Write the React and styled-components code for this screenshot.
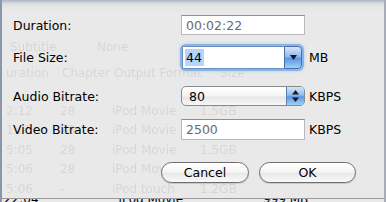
import styled, { createGlobalStyle } from "styled-components";

const GlobalStyle = createGlobalStyle`
  html, body {
    margin: 0;
    padding: 0;
    background: #e8e8e8;
  }
`;

const FONT = `"DejaVu Sans", "Liberation Sans", sans-serif`;

const ghostRows = [
  { y: 40, cells: [["Subtitle", 8], ["None", 95]] },
  { y: 66, cells: [["uration", 4], ["Chapter", 60], ["Output Format", 112], ["Size", 218]] },
  { y: 104, cells: [["2:12", 4], ["28", 58], ["iPod Movie", 110], ["1.5GB", 198]] },
  { y: 123, cells: [["1:05", 4], ["28", 58], ["iPod Movie", 110], ["1.5GB", 198]] },
  { y: 143, cells: [["5:05", 4], ["28", 58], ["iPod Movie", 110], ["1.5GB", 198]] },
  { y: 162, cells: [["5:06", 4], ["28", 58], ["iPod Movie", 110], ["1.2GB", 198]] },
  { y: 182, cells: [["5:06", 4], ["-", 58], ["iPod touch", 110], ["1.2GB", 198]] },
];

const SheetDialog = () => {
  return (
    <Sheet>
      <Backdrop>
        {ghostRows.map((row, i) => (
          <GhostRow key={i} style={{ top: row.y }}>
            {row.cells.map(([t, x], j) => (
              <GhostCell key={j} style={{ left: x }}>
                {t}
              </GhostCell>
            ))}
          </GhostRow>
        ))}
      </Backdrop>

      <Form>
        <Row $top={15} $height={20}>
          <Label>Duration:</Label>
          <TextField $muted>00:02:22</TextField>
        </Row>

        <Row $top={11} $height={23}>
          <Label>File Size:</Label>
          <Combo>
            <ComboText>
              <Selected>44</Selected>
            </ComboText>
            <ComboButton>
              <svg width="7" height="5" viewBox="0 0 7 5">
                <path d="M0 0 H7 L3.5 5 Z" fill="#1a1a1a" />
              </svg>
            </ComboButton>
          </Combo>
          <Unit>MB</Unit>
        </Row>

        <Row $top={17} $height={20}>
          <Label>Audio Bitrate:</Label>
          <Popup>
            <PopupText>80</PopupText>
            <StepperButton>
              <svg width="7" height="12" viewBox="0 0 7 12">
                <path d="M0 4.5 L3.5 0 L7 4.5 Z" fill="#1a1a1a" />
                <path d="M0 7.5 H7 L3.5 12 Z" fill="#1a1a1a" />
              </svg>
            </StepperButton>
          </Popup>
          <Unit>KBPS</Unit>
        </Row>

        <Row $top={13} $height={21}>
          <Label>Video Bitrate:</Label>
          <TextField $muted>2500</TextField>
          <Unit>KBPS</Unit>
        </Row>

        <Buttons>
          <PushButton $width={88}>Cancel</PushButton>
          <PushButton $width={97}>OK</PushButton>
        </Buttons>
      </Form>

      <UnderRow>
        <span>22:04</span>
        <span>iPod Movie</span>
        <span>999 MB</span>
      </UnderRow>
    </Sheet>
  );
};

const Sheet = styled.div`
  position: relative;
  width: 386px;
  height: 202px;
  overflow: hidden;
  font-family: ${FONT};
  background: linear-gradient(
    to bottom,
    #a9b3c1 0px,
    #c9ced6 2px,
    #dcdee2 4px,
    #e6e6e7 7px,
    #e9e9e9 12px,
    #e9e9e9 100%
  );
  border-left: 2px solid #8a97a9;
  border-right: 2px solid #a6adb8;
  box-sizing: border-box;
`;

const Backdrop = styled.div`
  position: absolute;
  inset: 0;
  opacity: 0.08;
  filter: blur(0.6px);
  pointer-events: none;
`;

const GhostRow = styled.div`
  position: absolute;
  left: 0;
  right: 0;
  height: 16px;
`;

const GhostCell = styled.span`
  position: absolute;
  top: 0;
  font-size: 12px;
  color: #000;
  white-space: nowrap;
`;

const Form = styled.div`
  position: relative;
  display: flex;
  flex-direction: column;
`;

const Row = styled.div`
  display: grid;
  grid-template-columns: 168px 124px auto;
  align-items: center;
  margin-top: ${(p) => p.$top}px;
  height: ${(p) => p.$height}px;
  padding-left: 11px;
`;

const Label = styled.span`
  font-size: 12.5px;
  color: #000;
  white-space: nowrap;
`;

const TextField = styled.div`
  box-sizing: border-box;
  height: 100%;
  background: #fff;
  border: 1px solid #b9b9b9;
  border-top-color: #8f8f8f;
  padding: 0 4px;
  display: flex;
  align-items: center;
  font-size: 12.5px;
  color: ${(p) => (p.$muted ? "#6a6a6a" : "#000")};
`;

const Combo = styled.div`
  box-sizing: border-box;
  height: 23px;
  width: 120px;
  display: flex;
  border-radius: 4px;
  box-shadow: 0 0 0 2px #8ab3e6, 0 0 3px 2px #a9c7ef;
  margin-left: 1px;
`;

const ComboText = styled.div`
  flex: 1;
  background: #fff;
  border: 1px solid #6f8fbf;
  border-right: none;
  display: flex;
  align-items: center;
  padding-left: 2px;
  font-size: 12.5px;
`;

const Selected = styled.span`
  background: #b5d5ff;
  padding: 1px 2px 1px 1px;
  color: #000;
`;

const ComboButton = styled.div`
  width: 16px;
  border: 1px solid #4a6ea5;
  border-radius: 0 4px 4px 0;
  background: linear-gradient(to bottom, #d6e7fb 0%, #8fbbef 45%, #5e98e2 55%, #9dd0fb 100%);
  display: flex;
  align-items: center;
  justify-content: center;
`;

const Popup = styled.div`
  box-sizing: border-box;
  height: 20px;
  display: flex;
  border: 1px solid #8a8a8a;
  border-radius: 5px;
  overflow: hidden;
  background: linear-gradient(to bottom, #ffffff 0%, #f4f4f4 50%, #e6e6e6 55%, #f7f7f7 100%);
`;

const PopupText = styled.div`
  flex: 1;
  display: flex;
  align-items: center;
  padding-left: 7px;
  font-size: 12.5px;
  color: #000;
`;

const StepperButton = styled.div`
  width: 17px;
  border-left: 1px solid #5b7fb5;
  background: linear-gradient(to bottom, #d6e7fb 0%, #8fbbef 45%, #5e98e2 55%, #9dd0fb 100%);
  display: flex;
  align-items: center;
  justify-content: center;
`;

const Unit = styled.span`
  font-size: 12.5px;
  color: #000;
  padding-left: 4px;
`;

const Buttons = styled.div`
  display: flex;
  justify-content: flex-end;
  gap: 10px;
  margin-top: 22px;
  padding-right: 28px;
`;

const PushButton = styled.div`
  box-sizing: border-box;
  width: ${(p) => p.$width}px;
  height: 21px;
  border: 1px solid #6e6e6e;
  border-radius: 11px;
  background: linear-gradient(to bottom, #ffffff 0%, #f6f6f6 45%, #e9e9e9 55%, #f9f9f9 100%);
  box-shadow: 0 1px 1px rgba(0, 0, 0, 0.15);
  display: flex;
  align-items: center;
  justify-content: center;
  font-size: 12.5px;
  color: #000;
`;

const UnderRow = styled.div`
  position: absolute;
  left: 0;
  right: 0;
  top: 198px;
  height: 4px;
  background: #e9e9e9;
  border-top: 1px solid #9a9a9a;
  overflow: hidden;
  display: flex;
  gap: 80px;
  font-size: 12px;
  line-height: 12px;
  color: #000;
  padding-left: 2px;

  span {
    margin-top: -6px;
  }
`;

export default function App() {
  return (
    <>
      <GlobalStyle />
      <SheetDialog />
    </>
  );
}
